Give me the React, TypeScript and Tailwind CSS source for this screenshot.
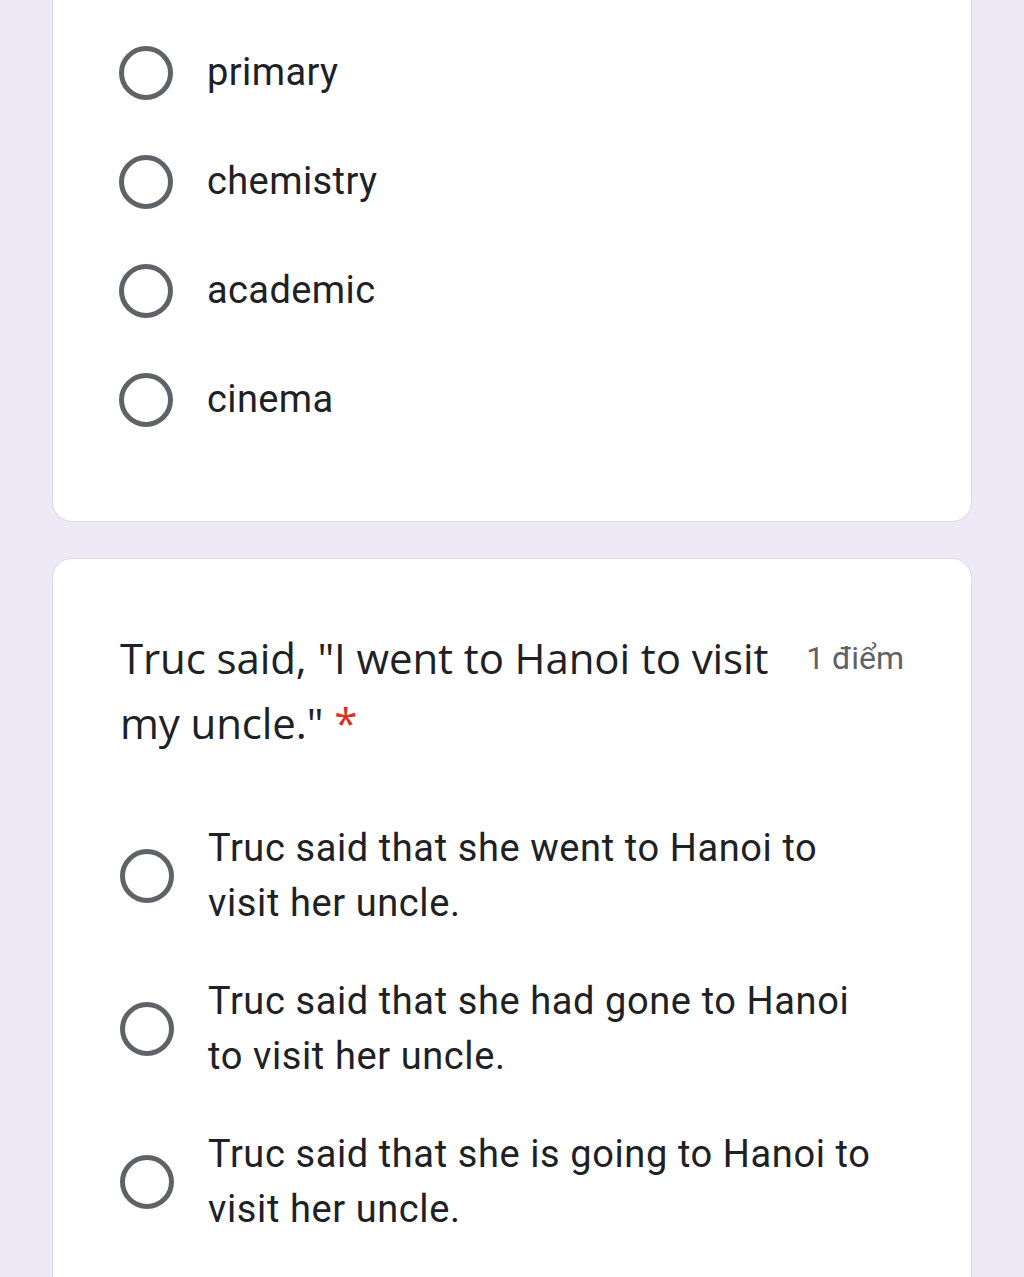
import React from "react";

const Radio = () => (
  <span className="block w-[54px] h-[54px] shrink-0 rounded-full border-[5px] border-[#5f6368]" />
);

const topOptions = ["primary", "chemistry", "academic", "cinema"];

const bottomOptions = [
  "Truc said that she went to Hanoi to visit her uncle.",
  "Truc said that she had gone to Hanoi to visit her uncle.",
  "Truc said that she is going to Hanoi to visit her uncle.",
];

export default function App() {
  return (
    <div className="min-h-[1277px] bg-[#ede9f7] px-[52px] pb-10 font-['Roboto',sans-serif] text-[#202124]">
      {/* Previous question (options only) */}
      <div className="bg-white border border-t-0 border-[#dadce0] rounded-b-[20px] px-[66px] pt-[18px] pb-[67px]">
        {topOptions.map((opt) => (
          <div key={opt} className="flex items-center h-[109px]">
            <Radio />
            <span className="ml-[34px] text-[38px] leading-[55px] tracking-[0.4px]">{opt}</span>
          </div>
        ))}
      </div>

      {/* Question card */}
      <div className="mt-[36px] bg-white border border-[#dadce0] rounded-[20px] px-[67px] pt-[66px] pb-[60px]">
        <div className="flex items-start">
          <h2 className="flex-1 pr-[30px] text-[42px] leading-[65px] font-['Open_Sans',sans-serif] tracking-[-0.1px]">
            Truc said, "I went to Hanoi to visit my uncle."{" "}
            <span className="text-[#d93025]">*</span>
          </h2>
          <span className="mt-[14px] text-[32px] leading-[38px] text-[#5f6368] whitespace-nowrap">
            1 điểm
          </span>
        </div>

        <div className="mt-[66px] flex flex-col gap-[43px]">
          {bottomOptions.map((opt) => (
            <div key={opt} className="flex items-center">
              <Radio />
              <span className="ml-[34px] w-[672px] text-[38px] leading-[55px] tracking-[0.6px]">{opt}</span>
            </div>
          ))}
        </div>
      </div>
    </div>
  );
}
